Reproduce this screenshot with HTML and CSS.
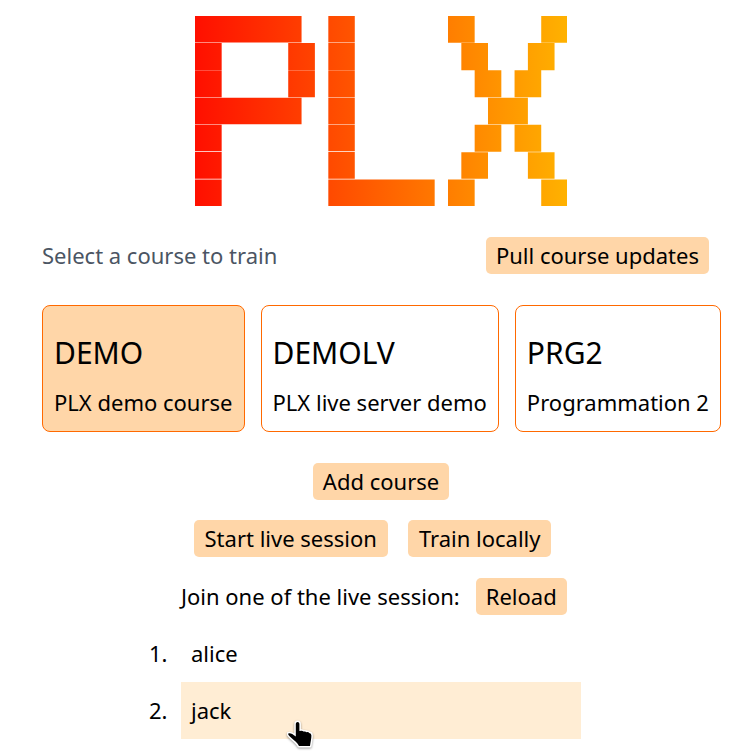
FILE: index.html
```html
<!DOCTYPE html>
<html lang="en">
<head>
<meta charset="utf-8">
<meta name="viewport" content="width=device-width, initial-scale=1">
<title>PLX</title>
<link rel="stylesheet" href="styles.css">
</head>
<body>
<main class="page">
  <h1 class="brand">
    <svg class="logo" viewBox="0 0 372 190" role="img" aria-label="PLX">
      <defs>
        <linearGradient id="flame" gradientUnits="userSpaceOnUse" x1="0" y1="0" x2="372" y2="0">
          <stop offset="0" stop-color="#ff0f00"/>
          <stop offset="1" stop-color="#ffb200"/>
        </linearGradient>
      </defs>
      <path fill="url(#flame)" d="M0 0H106.3V26.5H0Z M0 27H26.6V54H0Z M93 27H119.6V54H93Z M0 54.4H26.6V81H0Z M93 54.4H119.6V81H93Z M0 81.6H106.3V108H0Z M0 108.6H26.6V135H0Z M0 135.7H26.6V162.4H0Z M0 163H26.6V189.8H0Z
      M133 0H159.4V26.5H133Z M133 27H159.4V54H133Z M133 54.4H159.4V81H133Z M133 81.6H159.4V108H133Z M133 108.6H159.4V135H133Z M133 135.7H159.4V162.4H133Z M133 163H239.1V189.8H133Z
      M252.4 0H279V26.6H252.4Z M345.4 0H372V26.6H345.4Z M265.7 27H292.3V54H265.7Z M332.1 27H358.7V54H332.1Z M279 54.2H305.6V81H279Z M318.8 54.2H345.4V81H318.8Z M292.3 81.5H332.1V108H292.3Z M279 108.5H305.6V135.4H279Z M318.8 108.5H345.4V135.4H318.8Z M265.7 136H292.3V162.4H265.7Z M332.1 136H358.7V162.4H332.1Z M252.4 163H279V189.8H252.4Z M345.4 163H372V189.8H345.4Z"/>
    </svg>
  </h1>

  <div class="toolbar">
    <p class="hint">Select a course to train</p>
    <button class="btn" type="button">Pull course updates</button>
  </div>

  <div class="courses">
    <button class="course course-selected" type="button" aria-pressed="true">
      <span class="course-code">DEMO</span>
      <span class="course-name">PLX demo course</span>
    </button>
    <button class="course" type="button" aria-pressed="false">
      <span class="course-code">DEMOLV</span>
      <span class="course-name">PLX live server demo</span>
    </button>
    <button class="course" type="button" aria-pressed="false">
      <span class="course-code">PRG2</span>
      <span class="course-name">Programmation 2</span>
    </button>
  </div>

  <div class="actions">
    <div class="row"><button class="btn" type="button">Add course</button></div>
    <div class="row row-wide">
      <button class="btn" type="button">Start live session</button>
      <button class="btn" type="button">Train locally</button>
    </div>
  </div>

  <section class="sessions">
    <div class="join">
      <span>Join one of the live session:</span>
      <button class="btn" type="button">Reload</button>
    </div>
    <ol class="session-list">
      <li class="session"><span class="number">1.</span><button class="session-name" type="button">alice</button></li>
      <li class="session"><span class="number">2.</span><button class="session-name session-hover" type="button">jack
        <svg class="pointer" viewBox="0 0 28 32" aria-hidden="true">
          <path d="M8.8 5C8.8 2.3 12.4 2.3 12.4 5V12L14.4 11.7Q15.8 11.6 16.4 12.6Q18.6 12 19.4 13.2Q21.6 12.8 22.2 14Q24.4 14 24.4 16.5C24.4 20 23.5 23 23 27H12C10.5 24 7.5 21.5 4.5 19Q.6 16 1.2 14.6Q3.5 13 8.8 17.6Z" fill="#000" stroke="#fff" stroke-width="3" stroke-linejoin="round" paint-order="stroke"/>
        </svg>
      </button></li>
    </ol>
  </section>
</main>
</body>
</html>
```
FILE: styles.css
```css
* {
  box-sizing: border-box;
}

body {
  margin: 0;
  background: #fff;
  color: #000;
  font: 22px/29px "Noto Sans", sans-serif;
}

button {
  border: 0;
  color: inherit;
  font: inherit;
  white-space: nowrap;
  cursor: pointer;
}

.page {
  padding: 16px 24px 12px 42px;
}

.brand {
  margin: 0;
  text-align: center;
}

.logo {
  display: block;
  width: 55%;
  margin: 0 auto;
}

.toolbar {
  display: flex;
  align-items: center;
  justify-content: space-between;
  margin: 31px 11px 31px 0;
}

.hint {
  margin: 0;
  color: #4b5563;
}

.btn {
  padding: 4px 10px;
  border-radius: 5px;
  background: #ffd6a8;
}

.courses {
  display: grid;
  grid-template-columns: 202fr 239fr 206fr;
  gap: 16px;
}

.course {
  display: flex;
  flex-direction: column;
  gap: 16px;
  padding: 28px 11px 14px;
  border: 1px solid #ff6900;
  border-radius: 8px;
  background: #fff;
  text-align: left;
}

.course-selected {
  background: #ffd6a8;
}

.course-code {
  font-size: 30px;
  line-height: 38px;
}

.actions {
  display: grid;
  gap: 20px;
  margin: 31px 0 21px;
}

.row {
  display: flex;
  justify-content: center;
}

.row-wide {
  gap: 20px;
  padding-right: 17px;
}

.row-wide .btn {
  padding: 4px 11px;
}

.sessions {
  width: 59%;
  margin: 0 auto;
}

.join {
  display: flex;
  align-items: center;
  gap: 16px;
  white-space: nowrap;
}

.session-list {
  margin: 10px 0 0;
  padding: 0;
  list-style: none;
}

.session {
  display: flex;
  align-items: center;
  margin-left: -32px;
}

.number {
  width: 32px;
}

.session-name {
  position: relative;
  flex: 1;
  padding: 14px 10px;
  background: #fff;
  text-align: left;
}

.session-hover {
  background: #ffedd4;
}

.pointer {
  position: absolute;
  left: 106px;
  top: 37px;
  width: 28px;
  filter: drop-shadow(0 1px 1px #0006);
}
```
